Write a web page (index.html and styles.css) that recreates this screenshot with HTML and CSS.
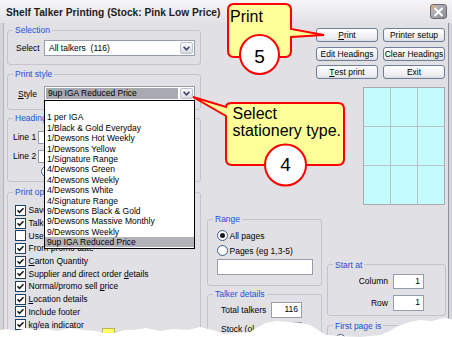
FILE: index.html
```html
<!DOCTYPE html>
<html lang="en">
<head>
    <meta charset="UTF-8">
    <meta name="viewport" content="width=device-width, initial-scale=1.0">
    <title>Shelf Talker Printing</title>
    <link rel="stylesheet" href="styles.css">
</head>
<body>
    <section class="window">
        <div class="titlebar">
            <span class="title">Shelf Talker Printing (Stock: Pink Low Price)</span>
            <span class="close">
                <svg width="11" height="10" viewBox="0 0 11 10"><path d="M1.5 1 L9.5 9 M9.5 1 L1.5 9" stroke="#fff" stroke-width="2"/></svg>
            </span>
        </div>
        <div class="dialog">
            <div class="left">
                <fieldset class="group selection">
                    <legend>Selection</legend>
                    <div class="group-body row">
                        <span class="lbl lbl-select">Select</span>
                        <div class="combo">
                            <span class="combo-text">All talkers&nbsp; (116)</span>
                            <span class="combo-btn"><svg width="7" height="5" viewBox="0 0 7 5"><path d="M0.6 0.8 L3.5 3.8 L6.4 0.8" fill="none" stroke="#3c4660" stroke-width="1.6"/></svg></span>
                        </div>
                    </div>
                </fieldset>

                <fieldset class="group print-style">
                    <legend>Print style</legend>
                    <div class="group-body row">
                        <span class="lbl lbl-style"><u>S</u>tyle</span>
                        <div class="combo combo-open">
                            <span class="combo-text">9up IGA Reduced Price</span>
                            <span class="combo-btn"><svg width="7" height="5" viewBox="0 0 7 5"><path d="M0.6 0.8 L3.5 3.8 L6.4 0.8" fill="none" stroke="#3c4660" stroke-width="1.6"/></svg></span>
                            <ul class="droplist">
                                <li>&nbsp;</li>
                                <li>1 per IGA</li>
                                <li>1/Black &amp; Gold Everyday</li>
                                <li>1/Dewsons Hot Weekly</li>
                                <li>1/Dewsons Yellow</li>
                                <li>1/Signature Range</li>
                                <li>4/Dewsons Green</li>
                                <li>4/Dewsons Weekly</li>
                                <li>4/Dewsons White</li>
                                <li>4/Signature Range</li>
                                <li>9/Dewsons Black &amp; Gold</li>
                                <li>9/Dewsons Massive Monthly</li>
                                <li>9/Dewsons Weekly</li>
                                <li class="picked">9up IGA Reduced Price</li>
                            </ul>
                        </div>
                    </div>
                </fieldset>

                <fieldset class="group headings">
                    <legend>Headings</legend>
                    <div class="group-body">
                        <div class="line-row"><span class="lbl lbl-line">Line 1</span><span class="text-input"></span></div>
                        <div class="line-row"><span class="lbl lbl-line">Line 2</span><span class="text-input"></span></div>
                        <div class="radio-row heading-radio"><span class="radio"></span></div>
                    </div>
                </fieldset>

                <fieldset class="group print-options">
                    <legend>Print options</legend>
                    <div class="group-body">
                        <div class="check-row"><span class="check"><svg width="9" height="9" viewBox="0 0 9 9"><path d="M1.5 4.3 L3.5 6.3 L7.5 2.3" fill="none" stroke="#1a1a1a" stroke-width="1.6"/></svg></span><span class="check-label">Save</span></div>
                        <div class="check-row"><span class="check"><svg width="9" height="9" viewBox="0 0 9 9"><path d="M1.5 4.3 L3.5 6.3 L7.5 2.3" fill="none" stroke="#1a1a1a" stroke-width="1.6"/></svg></span><span class="check-label">Talker</span></div>
                        <div class="check-row"><span class="check"></span><span class="check-label">Use</span></div>
                        <div class="check-row"><span class="check"><svg width="9" height="9" viewBox="0 0 9 9"><path d="M1.5 4.3 L3.5 6.3 L7.5 2.3" fill="none" stroke="#1a1a1a" stroke-width="1.6"/></svg></span><span class="check-label">From promo date</span></div>
                        <div class="check-row"><span class="check"><svg width="9" height="9" viewBox="0 0 9 9"><path d="M1.5 4.3 L3.5 6.3 L7.5 2.3" fill="none" stroke="#1a1a1a" stroke-width="1.6"/></svg></span><span class="check-label"><u>C</u>arton Quantity</span></div>
                        <div class="check-row"><span class="check"><svg width="9" height="9" viewBox="0 0 9 9"><path d="M1.5 4.3 L3.5 6.3 L7.5 2.3" fill="none" stroke="#1a1a1a" stroke-width="1.6"/></svg></span><span class="check-label">Supplier and direct order <u>d</u>etails</span></div>
                        <div class="check-row"><span class="check"><svg width="9" height="9" viewBox="0 0 9 9"><path d="M1.5 4.3 L3.5 6.3 L7.5 2.3" fill="none" stroke="#1a1a1a" stroke-width="1.6"/></svg></span><span class="check-label">Normal/promo sell <u>p</u>rice</span></div>
                        <div class="check-row"><span class="check"><svg width="9" height="9" viewBox="0 0 9 9"><path d="M1.5 4.3 L3.5 6.3 L7.5 2.3" fill="none" stroke="#1a1a1a" stroke-width="1.6"/></svg></span><span class="check-label"><u>L</u>ocation details</span></div>
                        <div class="check-row"><span class="check"><svg width="9" height="9" viewBox="0 0 9 9"><path d="M1.5 4.3 L3.5 6.3 L7.5 2.3" fill="none" stroke="#1a1a1a" stroke-width="1.6"/></svg></span><span class="check-label">Include footer</span></div>
                        <div class="check-row"><span class="check"><svg width="9" height="9" viewBox="0 0 9 9"><path d="M1.5 4.3 L3.5 6.3 L7.5 2.3" fill="none" stroke="#1a1a1a" stroke-width="1.6"/></svg></span><span class="check-label">kg/ea indicator</span></div>
                        <div class="swatch-row"><span class="swatch"></span></div>
                    </div>
                </fieldset>
            </div>

            <div class="right">
                <div class="buttons">
                    <div class="btn"><u>P</u>rint</div>
                    <div class="btn">Printer setup</div>
                    <div class="btn">Edit Headings</div>
                    <div class="btn">Clear Headings</div>
                    <div class="btn"><u>T</u>est print</div>
                    <div class="btn">Exit</div>
                </div>

                <div class="preview">
                    <span></span><span></span><span></span>
                    <span></span><span></span><span></span>
                    <span></span><span></span><span></span>
                </div>

                <div class="lower">
                    <div class="col-range">
                        <fieldset class="group range">
                            <legend>Range</legend>
                            <div class="group-body">
                                <div class="radio-row"><span class="radio on"></span><span>All pages</span></div>
                                <div class="radio-row"><span class="radio"></span><span>Pages (eg 1,3-5)</span></div>
                                <span class="text-input pages-input"></span>
                            </div>
                        </fieldset>
                        <fieldset class="group talker">
                            <legend>Talker details</legend>
                            <div class="group-body">
                                <div class="num-row"><span class="lbl lbl-talker">Total talkers</span><span class="num-input">116</span></div>
                                <div class="num-row"><span class="lbl lbl-talker">Stock (ol</span><span class="num-input">116</span></div>
                            </div>
                        </fieldset>
                    </div>
                    <div class="col-start">
                        <fieldset class="group start">
                            <legend>Start at</legend>
                            <div class="group-body">
                                <div class="num-row end"><span class="lbl">Column</span><span class="num-input">1</span></div>
                                <div class="num-row end"><span class="lbl">Row</span><span class="num-input">1</span></div>
                            </div>
                        </fieldset>
                        <fieldset class="group first-page">
                            <legend>First page is</legend>
                            <div class="group-body">
                                <div class="radio-row"><span class="radio"></span></div>
                            </div>
                        </fieldset>
                    </div>
                </div>
            </div>
        </div>

        <svg class="callouts" width="452" height="337" viewBox="0 0 452 337">
            <path d="M234 4 H285 Q291 4 291 10 V29 L324 35 L291 37 V51 Q291 57 285 57 H234 Q228 57 228 51 V10 Q228 4 234 4 Z" fill="#ffff99" stroke="#ff0000" stroke-width="2"/>
            <text x="230" y="21.5" font-size="16">Print</text>
            <circle cx="259.5" cy="54.5" r="19.5" fill="#fff" stroke="#ff0000" stroke-width="2"/>
            <text x="259.5" y="62.5" font-size="19" text-anchor="middle">5</text>

            <path d="M232 103 H338 Q344 103 344 109 V159 Q344 165 338 165 H232 Q226 165 226 159 V116 L193 97 L226 107 Q226 103 232 103 Z" fill="#ffff99" stroke="#ff0000" stroke-width="2"/>
            <text x="232.5" y="118.5" font-size="16">Select</text>
            <text x="232.5" y="135.5" font-size="16">stationery type.</text>
            <circle cx="285.5" cy="165" r="20.5" fill="#fff" stroke="#ff0000" stroke-width="2"/>
            <text x="285.5" y="171" font-size="19" text-anchor="middle">4</text>
        </svg>

        <svg class="torn" width="452" height="337" viewBox="0 0 452 337">
            <path d="M0 330 L8 329 L16 331 L26 328 L36 330 L48 329 L58 331 L70 328 L82 330 L96 331 L104 333 L116 333 L124 330 L134 330 L146 328 L160 331 L174 329 L188 330 L200 327 L212 330 L224 334 L238 333 L250 332 L258 327 L266 323 L276 321 L290 322 L300 323 L310 325 L318 330 L326 335 L340 336 L360 337 L380 335 L390 331 L398 326 L410 322 L420 320 L432 321 L444 318 L452 319 L452 337 L0 337 Z" fill="#fff"/>
        </svg>
    </section>
</body>
</html>
```

FILE: styles.css
```css
*{
    margin: 0;
    padding: 0;
    box-sizing: border-box;
}
body{
    background: #fff;
}
.window{
    position: relative;
    width: 452px;
    height: 337px;
    overflow: hidden;
    background: #d4d4dc;
    font-family: "Liberation Sans", Arial, sans-serif;
    font-size: 8.5px;
    color: #000;
}

/* title bar */
.titlebar{
    height: 23px;
    display: flex;
    align-items: flex-start;
    padding: 0 5px 0 6px;
    background: linear-gradient(#f6f6f8, #e2e2e7);
}
.title{
    flex: 1;
    padding-top: 7px;
    font-size: 10.2px;
    line-height: 12px;
    font-weight: bold;
    color: #1c1c1c;
}
.close{
    margin-top: 4px;
    width: 17px;
    height: 15px;
    display: flex;
    align-items: center;
    justify-content: center;
    border: 1px solid #6a6a73;
    border-radius: 3px;
    background: linear-gradient(135deg, #f0a860 0%, #b0b0b8 30%, #8a8a93 100%);
}

/* dialog body */
.dialog{
    display: flex;
    width: 446px;
    height: 314px;
    margin-left: 3px;
    padding: 2px 0 0 3px;
    border-left: 1px solid #b4b4bc;
    border-right: 1px solid #8e8e96;
    background: #e1e0e5;
}
.left{
    width: 194px;
    display: flex;
    flex-direction: column;
}
.right{
    flex: 1;
    display: flex;
    flex-direction: column;
    padding: 3px 2px 0 6px;
}
.right > *{
    flex-shrink: 0;
}

.group{
    border: 1px solid #c4c4ca;
    border-radius: 3px;
    padding: 0;
    min-width: 0;
}
.group legend{
    margin-left: 5px;
    padding: 0 2px;
    line-height: 10px;
    color: #1e50d2;
}
.row{
    display: flex;
    align-items: center;
}
.lbl{
    white-space: nowrap;
}

/* selection */
.selection .group-body{
    padding: 5px 0 8px 8px;
}
.lbl-select{
    width: 28px;
}
.combo{
    position: relative;
    width: 151px;
    height: 16px;
    display: flex;
    border: 1px solid #959cab;
    background: #fff;
}
.combo-text{
    flex: 1;
    padding-left: 4px;
    line-height: 14px;
    white-space: nowrap;
}
.combo-btn{
    width: 13px;
    margin: 1px;
    display: flex;
    align-items: center;
    justify-content: center;
    border: 1px solid #bcc0cc;
    border-radius: 2px;
    background: linear-gradient(#fafafc, #d8d9e2);
}

/* print style */
.print-style{
    margin-top: 4px;
}
.print-style .group-body{
    padding: 7px 0 8px 10px;
}
.lbl-style{
    width: 26px;
}
.combo-open{
    height: 15px;
}
.combo-open .combo-text{
    margin: 1px;
    padding-left: 2px;
    line-height: 11px;
    background: #a9a9b2;
}
.droplist{
    position: absolute;
    top: 100%;
    left: -1px;
    z-index: 5;
    width: 151px;
    list-style: none;
    padding: 1px 0;
    border: 1px solid #000;
    background: #fff;
}
.droplist li{
    height: 10.4px;
    line-height: 10.4px;
    padding-left: 2px;
    white-space: nowrap;
}
.droplist li.picked{
    background: #b2b2ba;
}

/* headings */
.headings{
    margin-top: 3px;
}
.headings .group-body{
    padding: 7px 0 4px 5px;
}
.line-row{
    height: 14px;
    display: flex;
    align-items: center;
    margin-bottom: 5px;
}
.lbl-line{
    width: 25px;
}
.text-input{
    display: block;
    width: 150px;
    height: 13px;
    border: 1px solid #959cab;
    background: #fff;
}
.radio-row{
    height: 13px;
    display: flex;
    align-items: center;
    gap: 2px;
}
.heading-radio{
    height: 11px;
    margin-top: -2px;
    padding-left: 28px;
}
.radio{
    width: 11px;
    height: 11px;
    border: 1px solid #3a5f8a;
    border-radius: 50%;
    background: #fff;
    display: flex;
    align-items: center;
    justify-content: center;
}
.radio.on::after{
    content: "";
    width: 5px;
    height: 5px;
    border-radius: 50%;
    background: #1a1a1a;
}

/* print options */
.print-options{
    flex: 1;
    margin-top: 5px;
}
.print-options .group-body{
    padding: 7px 0 0 7px;
}
.check-row{
    height: 12.7px;
    display: flex;
    align-items: center;
    overflow: hidden;
}
.check{
    flex: none;
    width: 11px;
    height: 11px;
    display: flex;
    align-items: center;
    justify-content: center;
    border: 1px solid #1c3f66;
    background: #fff;
}
.check-label{
    margin-left: 2.5px;
    white-space: nowrap;
}
.swatch-row{
    padding: 0 0 0 87px;
}
.swatch{
    display: block;
    width: 13px;
    height: 12px;
    margin-top: -3px;
    border: 1px solid #b8b850;
    background: #ffff66;
}

/* buttons */
.buttons{
    align-self: flex-end;
    margin-right: 1px;
    display: grid;
    grid-template-columns: 62px 62px;
    grid-auto-rows: 14px;
    gap: 4.5px 5px;
}
.btn{
    display: flex;
    align-items: center;
    justify-content: center;
    border: 1px solid #6f7f97;
    border-radius: 3px;
    background: linear-gradient(#ffffff, #ececf0 80%, #d8d8e0);
    white-space: nowrap;
}

/* page preview */
.preview{
    align-self: flex-end;
    margin: 8px 1px 0 0;
    width: 82px;
    height: 118px;
    display: grid;
    grid-template-columns: repeat(3, 1fr);
    grid-template-rows: repeat(3, 1fr);
    gap: 1px;
    border: 1px solid #a9a9b1;
    background: #b9c1c4;
}
.preview span{
    background: #c4fbfd;
}

/* lower groups */
.lower{
    display: flex;
    gap: 5px;
    margin-top: 9px;
}
.col-range{
    width: 115px;
}
.col-start{
    width: 119px;
    padding-top: 45.5px;
}
.range .group-body{
    padding: 5px 0 10px 9px;
}
.range .radio-row{
    gap: 1.5px;
    margin-bottom: 2px;
}
.pages-input{
    width: 96px;
    height: 16px;
    margin-top: 1px;
}
.talker{
    margin-top: 3px;
}
.talker .group-body{
    padding: 3px 0 0 13px;
}
.num-row{
    height: 15.5px;
    display: flex;
    align-items: center;
    margin-bottom: 4px;
}
.lbl-talker{
    width: 50px;
}
.num-input{
    width: 31px;
    height: 15.5px;
    padding-right: 3px;
    border: 1px solid #959cab;
    background: #fff;
    text-align: right;
    line-height: 13.5px;
}
.start .group-body{
    padding: 4px 21px 0 0;
}
.num-row.end{
    justify-content: flex-end;
    gap: 5px;
    margin-bottom: 6px;
}
.start .num-row.end:last-child{
    margin-bottom: 4.5px;
}
.first-page{
    margin-top: 4.5px;
}
.first-page .group-body{
    padding: 2px 0 0 7px;
}

/* overlays */
.callouts,
.torn{
    position: absolute;
    left: 0;
    top: 0;
    pointer-events: none;
    font-family: "Liberation Sans", Arial, sans-serif;
}
.callouts{
    z-index: 10;
}
.torn{
    z-index: 11;
}
```
